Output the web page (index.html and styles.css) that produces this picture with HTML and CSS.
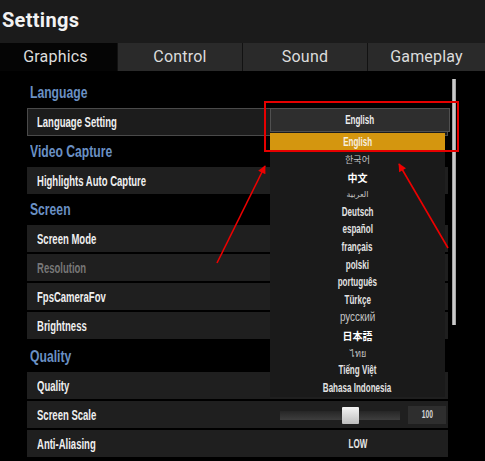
FILE: index.html
```html
<!DOCTYPE html>
<html lang="en">
<head>
<meta charset="utf-8">
<title>Settings</title>
<link rel="stylesheet" href="styles.css">
</head>
<body>
<div class="screen">
  <header class="titlebar"><h1 class="title">Settings</h1></header>
  <nav class="tabs">
    <div class="tab active">Graphics</div>
    <div class="tab">Control</div>
    <div class="tab">Sound</div>
    <div class="tab">Gameplay</div>
  </nav>
  <main class="content">
    <div class="list">
      <div class="section-title first"><span class="cond">Language</span></div>
      <div class="row focused"><span class="label">Language Setting</span></div>
      <div class="section-title"><span class="cond">Video Capture</span></div>
      <div class="row"><span class="label">Highlights Auto Capture</span></div>
      <div class="section-title"><span class="cond">Screen</span></div>
      <div class="row"><span class="label">Screen Mode</span></div>
      <div class="row"><span class="label disabled">Resolution</span></div>
      <div class="row"><span class="label">FpsCameraFov</span></div>
      <div class="row"><span class="label">Brightness</span></div>
      <div class="section-title spaced"><span class="cond">Quality</span></div>
      <div class="row"><span class="label">Quality</span></div>
      <div class="row">
        <span class="label">Screen Scale</span>
        <span class="value slider">
          <span class="track"><span class="knob"></span></span>
          <span class="num"><span class="condc">100</span></span>
        </span>
      </div>
      <div class="row"><span class="label">Anti-Aliasing</span><span class="value text"><span class="condc">LOW</span></span></div>
    </div>
    <div class="scrollbar"></div>
  </main>

  <div class="dropdown">
    <div class="dd-head"><span class="condc">English</span></div>
    <ul class="dd-list">
      <li class="dd-item selected"><span class="condc">English</span></li>
      <li class="dd-item light cjk-kr"><span>한국어</span></li>
      <li class="dd-item cjk-sc"><span>中文</span></li>
      <li class="dd-item light ar"><span>العربية</span></li>
      <li class="dd-item"><span class="condc">Deutsch</span></li>
      <li class="dd-item"><span class="condc">español</span></li>
      <li class="dd-item"><span class="condc">français</span></li>
      <li class="dd-item"><span class="condc">polski</span></li>
      <li class="dd-item"><span class="condc">português</span></li>
      <li class="dd-item"><span class="condc">Türkçe</span></li>
      <li class="dd-item light ru"><span class="condc">русский</span></li>
      <li class="dd-item cjk-jp"><span>日本語</span></li>
      <li class="dd-item light th"><span>ไทย</span></li>
      <li class="dd-item"><span class="condc">Tiếng Việt</span></li>
      <li class="dd-item"><span class="condc">Bahasa Indonesia</span></li>
    </ul>
  </div>

  <div class="callout"></div>

  <svg class="arrows" width="485" height="461" viewBox="0 0 485 461">
    <defs>
      <marker id="head" viewBox="0 0 10 10" refX="9" refY="5" markerWidth="6" markerHeight="5" orient="auto">
        <path d="M0 0 L10 5 L0 10 Z" fill="#ee0000"/>
      </marker>
    </defs>
    <line x1="217" y1="263" x2="265" y2="166" stroke="#ee0000" stroke-width="1.6" marker-end="url(#head)"/>
    <line x1="448" y1="248" x2="399" y2="164" stroke="#ee0000" stroke-width="1.6" marker-end="url(#head)"/>
  </svg>
</div>
</body>
</html>
```

FILE: styles.css
```css
* { box-sizing: border-box; }

html, body {
  margin: 0;
  padding: 0;
  background: #000;
}

.screen {
  position: relative;
  width: 485px;
  height: 461px;
  overflow: hidden;
  background: #000;
  font-family: "Liberation Sans", Arial, sans-serif;
}

/* condensed display face emulation */
.cond {
  display: inline-block;
  transform: scaleX(0.76);
  transform-origin: left center;
  white-space: nowrap;
}

.condc {
  display: inline-block;
  transform: scaleX(0.67);
  transform-origin: center center;
  white-space: nowrap;
}

.titlebar {
  height: 43px;
  background: #1b1b1b;
  padding: 8px 0 0 2px;
}

.title {
  margin: 0;
  font-family: Roboto, "Liberation Sans", sans-serif;
  font-weight: 700;
  font-size: 20px;
  line-height: 24px;
  color: #f2f2f2;
  letter-spacing: 0.3px;
}

.tabs {
  display: grid;
  grid-template-columns: 117px 124px 124px 1fr;
  column-gap: 1px;
  height: 28px;
  background: #121212;
}

.tab {
  background: #2a2a2a;
  color: #dcdcdc;
  font-family: Roboto, "Liberation Sans", sans-serif;
  font-size: 16px;
  line-height: 28px;
  text-align: center;
  letter-spacing: 0.2px;
}

.tab.active {
  background: #050505;
  padding-right: 6px;
}

.content {
  display: flex;
  padding-left: 27px;
}

.list {
  width: 421px;
  display: flex;
  flex-direction: column;
}

.section-title {
  height: 31px;
  padding: 7px 0 0 3px;
  line-height: 18px;
  font-size: 16px;
  font-weight: 700;
  color: #6a90c4;
}

.section-title.first { margin-top: 6px; }
.section-title.spaced { height: 33px; padding-top: 9px; }

.row {
  display: flex;
  align-items: center;
  height: 27px;
  padding-left: 10px;
  background: #1f1f1f;
}

.row + .row { margin-top: 2px; }

.row.focused {
  height: 28px;
  padding-left: 9px;
  border: 1px solid #4a4a4a;
  background: #1c1c1c;
}

.label {
  flex: 1;
  font-size: 14px;
  font-weight: 700;
  color: #efefef;
  white-space: nowrap;
  transform: scaleX(0.68);
  transform-origin: left center;
}

.label.disabled { color: #777; }

.value {
  width: 176px;
  margin-right: 2px;
  height: 27px;
  display: flex;
  align-items: center;
}

.value.text {
  justify-content: center;
  font-size: 12px;
  font-weight: 700;
  color: #e6e6e6;
}

.slider { padding-left: 10px; }

.track {
  position: relative;
  width: 120px;
  height: 9px;
  margin-top: 2px;
  background: linear-gradient(#262626, #3e3e3e);
}

.knob {
  position: absolute;
  left: 62px;
  top: -4px;
  width: 17px;
  height: 17px;
  border-radius: 1px;
  background: linear-gradient(#f4f4f4, #bdbdbd);
}

.num {
  width: 38px;
  height: 18px;
  margin-left: 8px;
  background: #2e2e2e;
  color: #d6d6d6;
  font-size: 10px;
  font-weight: 700;
  line-height: 18px;
  text-align: center;
}

.scrollbar {
  width: 4px;
  height: 246px;
  margin: 8px 0 0 4px;
  background: linear-gradient(90deg, #8c8c8c, #d0d0d0 40%, #c4c4c4 70%, #8c8c8c);
}

.dropdown {
  position: absolute;
  left: 270px;
  top: 108px;
  width: 180px;
}

.dd-head {
  height: 24px;
  border: 1px solid #505050;
  background: #2e2e2e;
  color: #ececec;
  font-size: 12px;
  font-weight: 700;
  line-height: 23px;
  text-align: center;
}

.dd-list {
  list-style: none;
  margin: 1px 0 0;
  padding: 0;
  width: 175px;
  background: #1a1a1a;
}

.dd-item {
  height: 17.6px;
  line-height: 17.6px;
  text-align: center;
  font-size: 12px;
  font-weight: 700;
  color: #e2e2e2;
  white-space: nowrap;
}

.dd-item.selected {
  height: 18px;
  line-height: 18px;
  background: #d4960f;
  color: #f6f0e0;
}

.dd-item.light { font-weight: 400; color: #c4c4c4; }
.dd-item.ru .condc { transform: scaleX(0.82); }
.dd-item.cjk-kr { font-family: "Noto Sans CJK KR", sans-serif; font-size: 9px; }
.dd-item.cjk-sc { font-family: "Noto Sans CJK SC", sans-serif; font-size: 10px; color: #fff; }
.dd-item.cjk-jp { font-family: "Noto Sans CJK JP", sans-serif; font-size: 10px; color: #fff; }
.dd-item.ar { font-family: "DejaVu Sans", sans-serif; font-size: 8px; }
.dd-item.th { font-family: "Noto Sans", "DejaVu Sans", sans-serif; font-size: 9px; }

.callout {
  position: absolute;
  left: 264px;
  top: 101px;
  width: 195px;
  height: 51px;
  border: 2px solid #e60000;
}

.arrows {
  position: absolute;
  left: 0;
  top: 0;
  pointer-events: none;
}
```
